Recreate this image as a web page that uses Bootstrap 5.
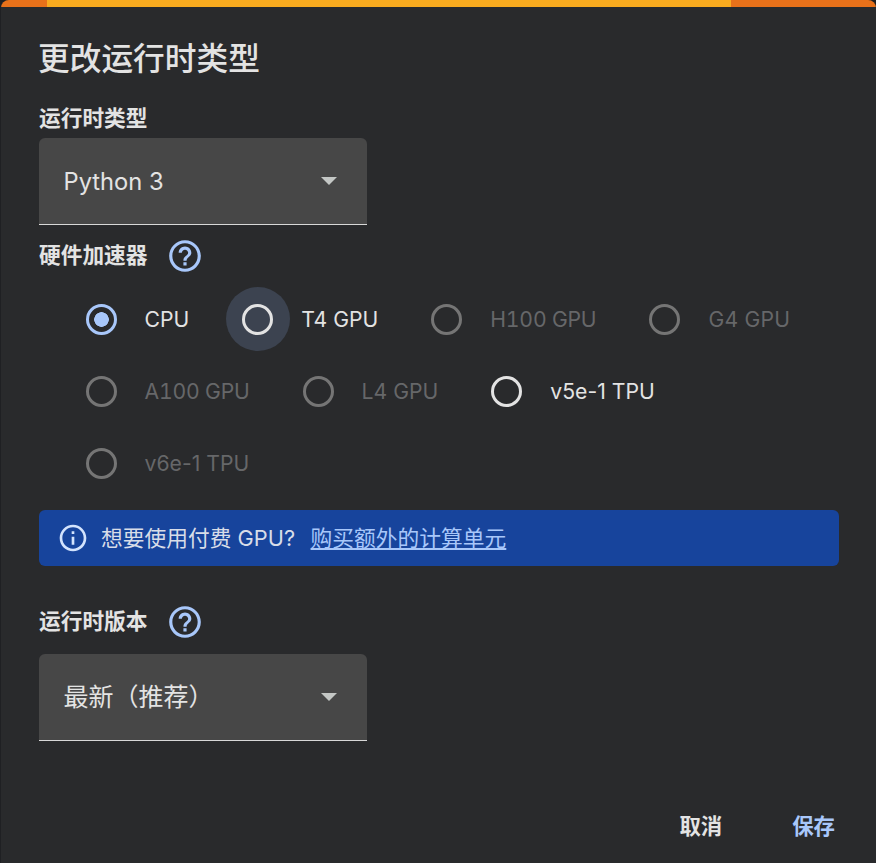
<!DOCTYPE html>
<html lang="zh-CN">
<head>
<meta charset="utf-8">
<title>更改运行时类型</title>
<link href="https://cdn.jsdelivr.net/npm/bootstrap@5.3.0/dist/css/bootstrap.min.css" rel="stylesheet">
<style>
html,body{height:100%;overflow:hidden}
body{background:#1f2023;font-family:Inter,"Noto Sans CJK SC",sans-serif;color:#e3e3e3}
.dlg{height:863px;margin-left:1px;background:#292a2c;border-radius:8px 8px 0 0;overflow:hidden}
.topbar{height:7px}
.seg-o{background:#e8711a}
.seg-o1{width:46px}
.seg-y{width:684px;background:#f9ab1f}
.seg-o2{flex:1}
.dlg-body{padding:0 37px 0 38px}
.dlg-title{font-size:31.7px;font-weight:500;line-height:44px;margin:30px 0 0 -1px;color:#e3e3e3}
.fld-label{font-size:21.7px;font-weight:700;line-height:32px;margin:0;color:#e3e3e3}
.lbl-a{margin:21px 0 0;height:36px}
.lbl-b{height:62px;gap:19px;align-items:center}
.lbl-b .fld-label{padding-bottom:2px}
.sel{width:328px;height:87px;background:#474747;border-radius:6px 6px 0 0;border-bottom:1px solid #d8d8d8;padding:0 30px 0 24.5px;color:#e3e3e3}
.sel-lat{font-size:23.7px;padding-top:2px}
.sel-cjk{font-size:25px;padding-top:1px}
.caret-tri{width:0;height:0;border-left:8px solid transparent;border-right:8px solid transparent;border-top:8px solid #c4c7c5}
.radios{padding-left:30px;gap:8px 36.5px}
.opt{height:64px;font-size:21.2px;color:#e3e3e3}
.opt.off{color:#666769}
.opt-t{padding-top:2px}
.opt-num{font-variant-numeric:tabular-nums;letter-spacing:-.2px}
.opt-g{letter-spacing:.2px}
.rip{width:64px;height:64px;border-radius:50%;margin-right:11.5px}
.rip.hov{background:#3c4350}
.ring{display:block;width:31px;height:31px;border-radius:50%;border:3px solid #e3e3e3}
.off .ring{border-color:#757575}
.ring.on{border-color:#a8c7fa;background:radial-gradient(circle,#a8c7fa 0 7px,transparent 7.6px)}
.promo{height:56px;margin-top:15px;background:#17449c;border-radius:6px;padding-left:18px;font-size:21.75px;color:#d8dde8}
.promo svg{margin-right:12px}
.promo a{color:#a8c7fa;margin-left:15.5px}
.icn-blue{fill:#a8c7fa;flex:none}
.icn-info{fill:#d3e3fd;flex:none}
.lbl-c{margin-top:24px;height:64px}
.acts{margin-top:69px;gap:70px;padding-right:4px}
.act{font-size:21.4px;font-weight:700;padding:0;border:0;line-height:32px}
.act-c{color:#e3e3e3}
.act-s{color:#a8c7fa}
</style>
</head>
<body>
<div class="dlg">
  <div class="topbar d-flex"><div class="seg-o seg-o1"></div><div class="seg-y"></div><div class="seg-o seg-o2"></div></div>
  <div class="dlg-body">
    <h1 class="dlg-title">更改运行时类型</h1>
    <p class="fld-label lbl-a">运行时类型</p>
    <div class="sel d-flex align-items-center justify-content-between"><span class="sel-lat">Python 3</span><span class="caret-tri"></span></div>

    <div class="d-flex lbl-b">
      <span class="fld-label">硬件加速器</span>
      <svg class="icn-blue" width="38" height="38" viewBox="0 0 24 24"><path d="M11 18h2v-2h-2v2zm1-16C6.48 2 2 6.48 2 12s4.48 10 10 10 10-4.48 10-10S17.52 2 12 2zm0 18c-4.41 0-8-3.59-8-8s3.59-8 8-8 8 3.59 8 8-3.59 8-8 8zm0-14c-2.21 0-4 1.79-4 4h2c0-1.1.9-2 2-2s2 .9 2 2c0 2-3 1.75-3 5h2c0-2.25 3-2.5 3-5 0-2.21-1.79-4-4-4z"/></svg>
    </div>

    <div class="radios d-flex flex-wrap">
      <div class="opt d-flex align-items-center"><span class="rip d-flex align-items-center justify-content-center"><span class="ring on"></span></span><span class="opt-t">CPU</span></div>
      <div class="opt d-flex align-items-center"><span class="rip hov d-flex align-items-center justify-content-center"><span class="ring"></span></span><span class="opt-t">T4 GPU</span></div>
      <div class="opt off d-flex align-items-center"><span class="rip d-flex align-items-center justify-content-center"><span class="ring"></span></span><span class="opt-t opt-num">H100 GPU</span></div>
      <div class="opt off d-flex align-items-center"><span class="rip d-flex align-items-center justify-content-center"><span class="ring"></span></span><span class="opt-t opt-g">G4 GPU</span></div>
      <div class="opt off d-flex align-items-center"><span class="rip d-flex align-items-center justify-content-center"><span class="ring"></span></span><span class="opt-t opt-num">A100 GPU</span></div>
      <div class="opt off d-flex align-items-center"><span class="rip d-flex align-items-center justify-content-center"><span class="ring"></span></span><span class="opt-t">L4 GPU</span></div>
      <div class="opt d-flex align-items-center"><span class="rip d-flex align-items-center justify-content-center"><span class="ring"></span></span><span class="opt-t">v5e-1 TPU</span></div>
      <div class="opt off d-flex align-items-center"><span class="rip d-flex align-items-center justify-content-center"><span class="ring"></span></span><span class="opt-t">v6e-1 TPU</span></div>
    </div>

    <div class="promo d-flex align-items-center">
      <svg class="icn-info" width="32" height="32" viewBox="0 0 24 24"><path d="M11 7h2v2h-2zm0 4h2v6h-2zm1-9C6.48 2 2 6.48 2 12s4.48 10 10 10 10-4.48 10-10S17.52 2 12 2zm0 18c-4.41 0-8-3.59-8-8s3.59-8 8-8 8 3.59 8 8-3.59 8-8 8z"/></svg>
      <span>想要使用付费 GPU?</span><a href="#">购买额外的计算单元</a>
    </div>

    <div class="d-flex lbl-b lbl-c">
      <span class="fld-label">运行时版本</span>
      <svg class="icn-blue" width="38" height="38" viewBox="0 0 24 24"><path d="M11 18h2v-2h-2v2zm1-16C6.48 2 2 6.48 2 12s4.48 10 10 10 10-4.48 10-10S17.52 2 12 2zm0 18c-4.41 0-8-3.59-8-8s3.59-8 8-8 8 3.59 8 8-3.59 8-8 8zm0-14c-2.21 0-4 1.79-4 4h2c0-1.1.9-2 2-2s2 .9 2 2c0 2-3 1.75-3 5h2c0-2.25 3-2.5 3-5 0-2.21-1.79-4-4-4z"/></svg>
    </div>
    <div class="sel d-flex align-items-center justify-content-between"><span class="sel-cjk">最新（推荐）</span><span class="caret-tri"></span></div>

    <div class="acts d-flex justify-content-end">
      <button type="button" class="btn act act-c">取消</button>
      <button type="button" class="btn act act-s">保存</button>
    </div>
  </div>
</div>
<script src="https://cdn.jsdelivr.net/npm/bootstrap@5.3.0/dist/js/bootstrap.bundle.min.js"></script>
</body>
</html>
